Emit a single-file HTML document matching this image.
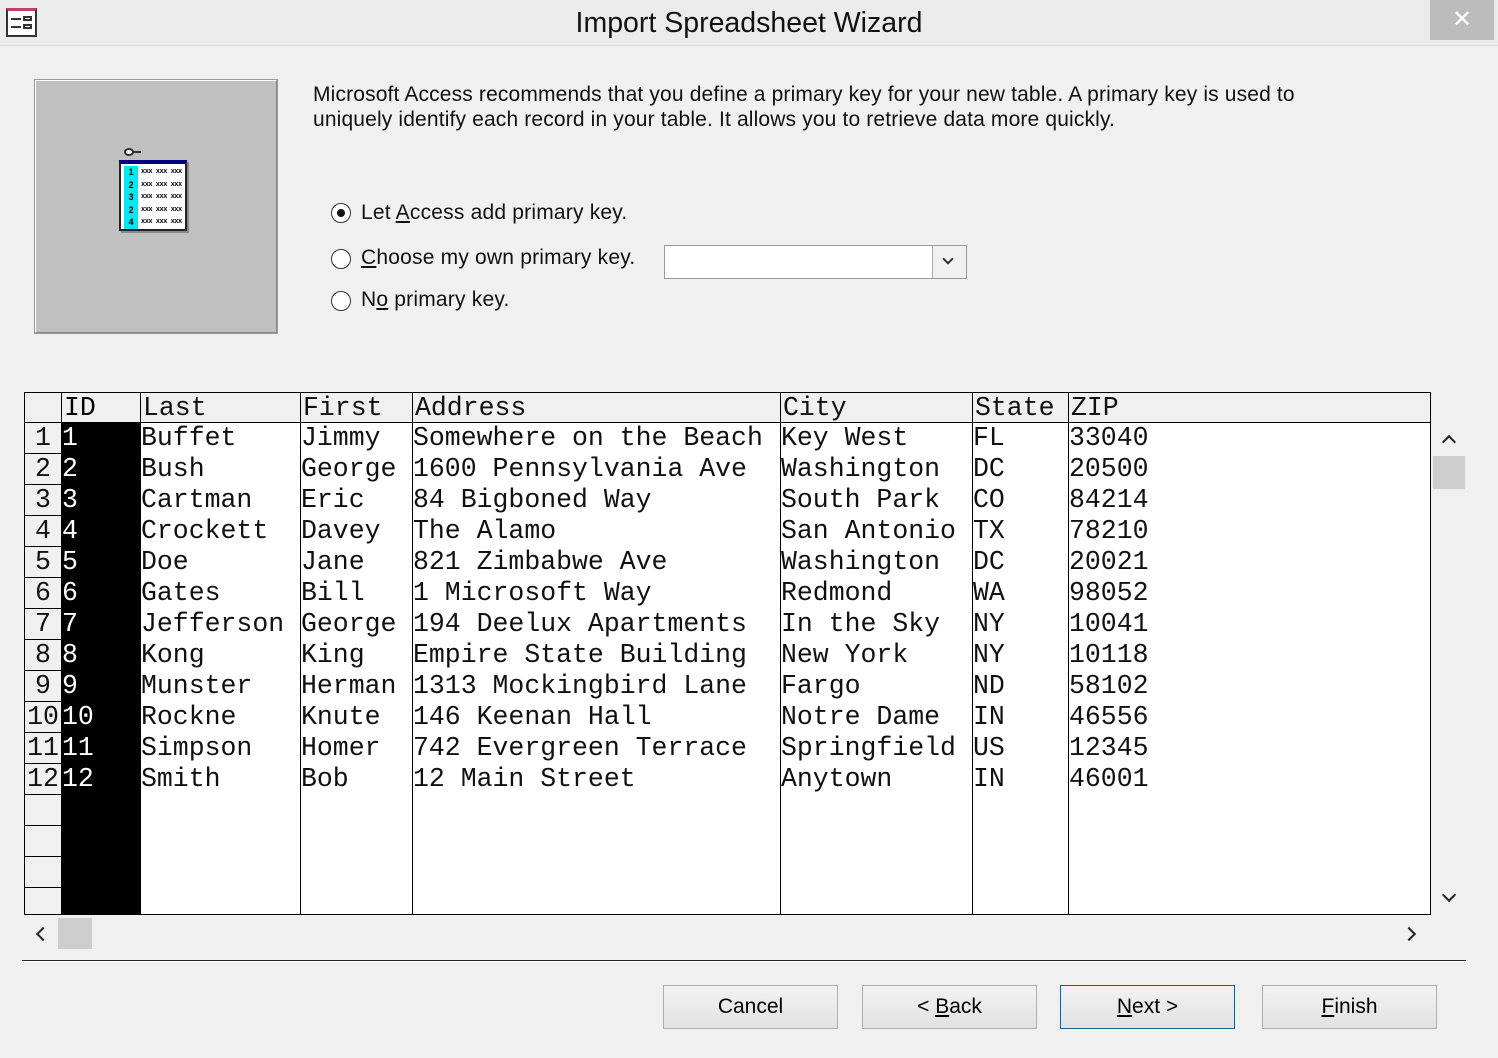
<!DOCTYPE html>
<html><head><meta charset="utf-8"><style>
*{margin:0;padding:0;box-sizing:border-box}
body{width:1498px;height:1058px;background:#f0f0f0;position:relative;overflow:hidden;font-family:"Liberation Sans",sans-serif;color:#000}
.a{position:absolute}
.title{left:0;top:0;width:1498px;height:46px;background:#ebebeb;border-bottom:1px solid #dcdcdc}
.ui{font-size:21px;white-space:nowrap;letter-spacing:0.2px;color:#111}
.col{position:absolute;top:393px;height:521px;border-left:1px solid #000;font-family:"Liberation Mono",monospace;font-size:26.5px;line-height:31px;white-space:pre;overflow:hidden;color:#111}
.col .h{height:30px;background:#f0f0f0;border-bottom:1px solid #000;padding-left:2px;line-height:31px}
.col div{padding-left:0}
.rh{white-space:normal}
.rh div{height:31px;border-bottom:1px solid #000;text-align:center;background:#f0f0f0}
.rh .h{height:30px}
.btn{position:absolute;top:985px;height:44px;width:175px;border:1px solid #adadad;background:linear-gradient(#f2f2f2,#e2e2e2);font-size:21px;text-align:center;line-height:42px}
.radio{position:absolute;width:20px;height:20px;border:1px solid #333;border-radius:50%;background:#fff}
.arr{position:absolute;width:10px;height:10px;border-left:2px solid #222;border-top:2px solid #222}
</style></head><body>
<div class="a title"></div>
<div class="a" style="left:6px;top:8px;width:31px;height:29px;border:2px solid #333;border-top:3px solid #c0406a;background:#fff">
<div class="a" style="left:3px;top:7px;width:10px;height:2px;background:#333"></div>
<div class="a" style="left:3px;top:15px;width:10px;height:2px;background:#333"></div>
<div class="a" style="left:15px;top:5px;width:9px;height:5px;border:2px solid #333"></div>
<div class="a" style="left:15px;top:13px;width:9px;height:5px;border:2px solid #333"></div>
</div>
<div class="a" style="left:0;top:7px;width:1498px;text-align:center;font-size:28.5px;color:#111">Import Spreadsheet Wizard</div>
<div class="a" style="left:1430px;top:0;width:64px;height:40px;background:#bcbcbc;color:#fff;font-size:24px;text-align:center;line-height:40px">✕</div>

<div class="a" style="left:35px;top:80px;width:242px;height:253px;background:#c0c0c0;border:1px solid #888;border-top-color:#fff;border-left-color:#fff;outline:1px solid #999"></div>
<div class="a" style="left:124px;top:148px;width:10px;height:8px;border:2px solid #333;border-radius:50%;background:#fff"></div>
<div class="a" style="left:133px;top:151px;width:8px;height:2px;background:#333"></div>
<div class="a" style="left:119px;top:160px;width:68px;height:71px;background:#fff;border:2px solid #222;border-top:4px solid #000080;box-shadow:2px 2px 0 #888">
<div class="a" style="left:3px;top:2px;width:14px;height:63px;background:#00e8f0;font:bold 9px/12.6px 'Liberation Sans';text-align:center">1<br>2<br>3<br>2<br>4</div>
<div class="a" style="left:20px;top:2px;font:bold 7px/12.6px 'Liberation Mono';letter-spacing:-0.5px">xxx xxx xxx<br>xxx xxx xxx<br>xxx xxx xxx<br>xxx xxx xxx<br>xxx xxx xxx</div>
</div>

<div class="a ui" style="left:313px;top:82px;line-height:25px;font-size:21px;letter-spacing:0.15px">Microsoft Access recommends that you define a primary key for your new table. A primary key is used to<br>uniquely identify each record in your table. It allows you to retrieve data more quickly.</div>

<div class="radio" style="left:331px;top:203px"><div class="a" style="left:5px;top:5px;width:8px;height:8px;border-radius:50%;background:#111"></div></div>
<div class="a ui" style="left:361px;top:201px">Let <u>A</u>ccess add primary key.</div>
<div class="radio" style="left:331px;top:249px"></div>
<div class="a ui" style="left:361px;top:246px"><u>C</u>hoose my own primary key.</div>
<div class="radio" style="left:331px;top:291px"></div>
<div class="a ui" style="left:361px;top:288px">N<u>o</u> primary key.</div>
<div class="a" style="left:664px;top:245px;width:303px;height:34px;background:#fff;border:1px solid #999"></div>
<div class="a" style="left:932px;top:246px;width:34px;height:32px;background:#f0f0f0;border-left:1px solid #aaa"></div>
<div class="arr" style="left:944px;top:255px;width:8px;height:8px;transform:rotate(225deg);border-color:#333"></div>

<div class="a" style="left:24px;top:392px;width:1407px;height:523px;background:#fff;border:1px solid #000"></div>
<div class="col rh" style="left:25px;width:36px;border-left:none"><div class="h" style="padding:0"></div><div>1</div><div>2</div><div>3</div><div>4</div><div>5</div><div>6</div><div>7</div><div>8</div><div>9</div><div>10</div><div>11</div><div>12</div><div></div><div></div><div></div><div></div></div>
<div class="col" style="left:61px;width:79px;background:#000;color:#fff"><div class="h" style="color:#000">ID</div><div>1
2
3
4
5
6
7
8
9
10
11
12</div></div>
<div class="col" style="left:140px;width:160px"><div class="h">Last</div><div>Buffet
Bush
Cartman
Crockett
Doe
Gates
Jefferson
Kong
Munster
Rockne
Simpson
Smith</div></div>
<div class="col" style="left:300px;width:112px"><div class="h">First</div><div>Jimmy
George
Eric
Davey
Jane
Bill
George
King
Herman
Knute
Homer
Bob</div></div>
<div class="col" style="left:412px;width:368px"><div class="h">Address</div><div>Somewhere on the Beach
1600 Pennsylvania Ave
84 Bigboned Way
The Alamo
821 Zimbabwe Ave
1 Microsoft Way
194 Deelux Apartments
Empire State Building
1313 Mockingbird Lane
146 Keenan Hall
742 Evergreen Terrace
12 Main Street</div></div>
<div class="col" style="left:780px;width:192px"><div class="h">City</div><div>Key West
Washington
South Park
San Antonio
Washington
Redmond
In the Sky
New York
Fargo
Notre Dame
Springfield
Anytown</div></div>
<div class="col" style="left:972px;width:96px"><div class="h">State</div><div>FL
DC
CO
TX
DC
WA
NY
NY
ND
IN
US
IN</div></div>
<div class="col" style="left:1068px;width:362px"><div class="h">ZIP</div><div>33040
20500
84214
78210
20021
98052
10041
10118
58102
46556
12345
46001</div></div>
<div class="a" style="left:24px;top:914px;width:1407px;height:1px;background:#000"></div>

<div class="arr" style="left:1444px;top:437px;transform:rotate(45deg)"></div>
<div class="a" style="left:1433px;top:456px;width:32px;height:33px;background:#cdcdcd"></div>
<div class="arr" style="left:1444px;top:890px;transform:rotate(225deg)"></div>
<div class="arr" style="left:38px;top:929px;transform:rotate(-45deg)"></div>
<div class="a" style="left:58px;top:918px;width:34px;height:31px;background:#cdcdcd"></div>
<div class="arr" style="left:1404px;top:929px;transform:rotate(135deg)"></div>

<div class="a" style="left:22px;top:960px;width:1444px;height:2px;background:#222;border-bottom:1px solid #fff"></div>

<div class="btn" style="left:663px">Cancel</div>
<div class="btn" style="left:862px">&lt; <u>B</u>ack</div>
<div class="btn" style="left:1060px;border-color:#1f5f7a"><u>N</u>ext &gt;</div>
<div class="btn" style="left:1262px"><u>F</u>inish</div>
</body></html>
